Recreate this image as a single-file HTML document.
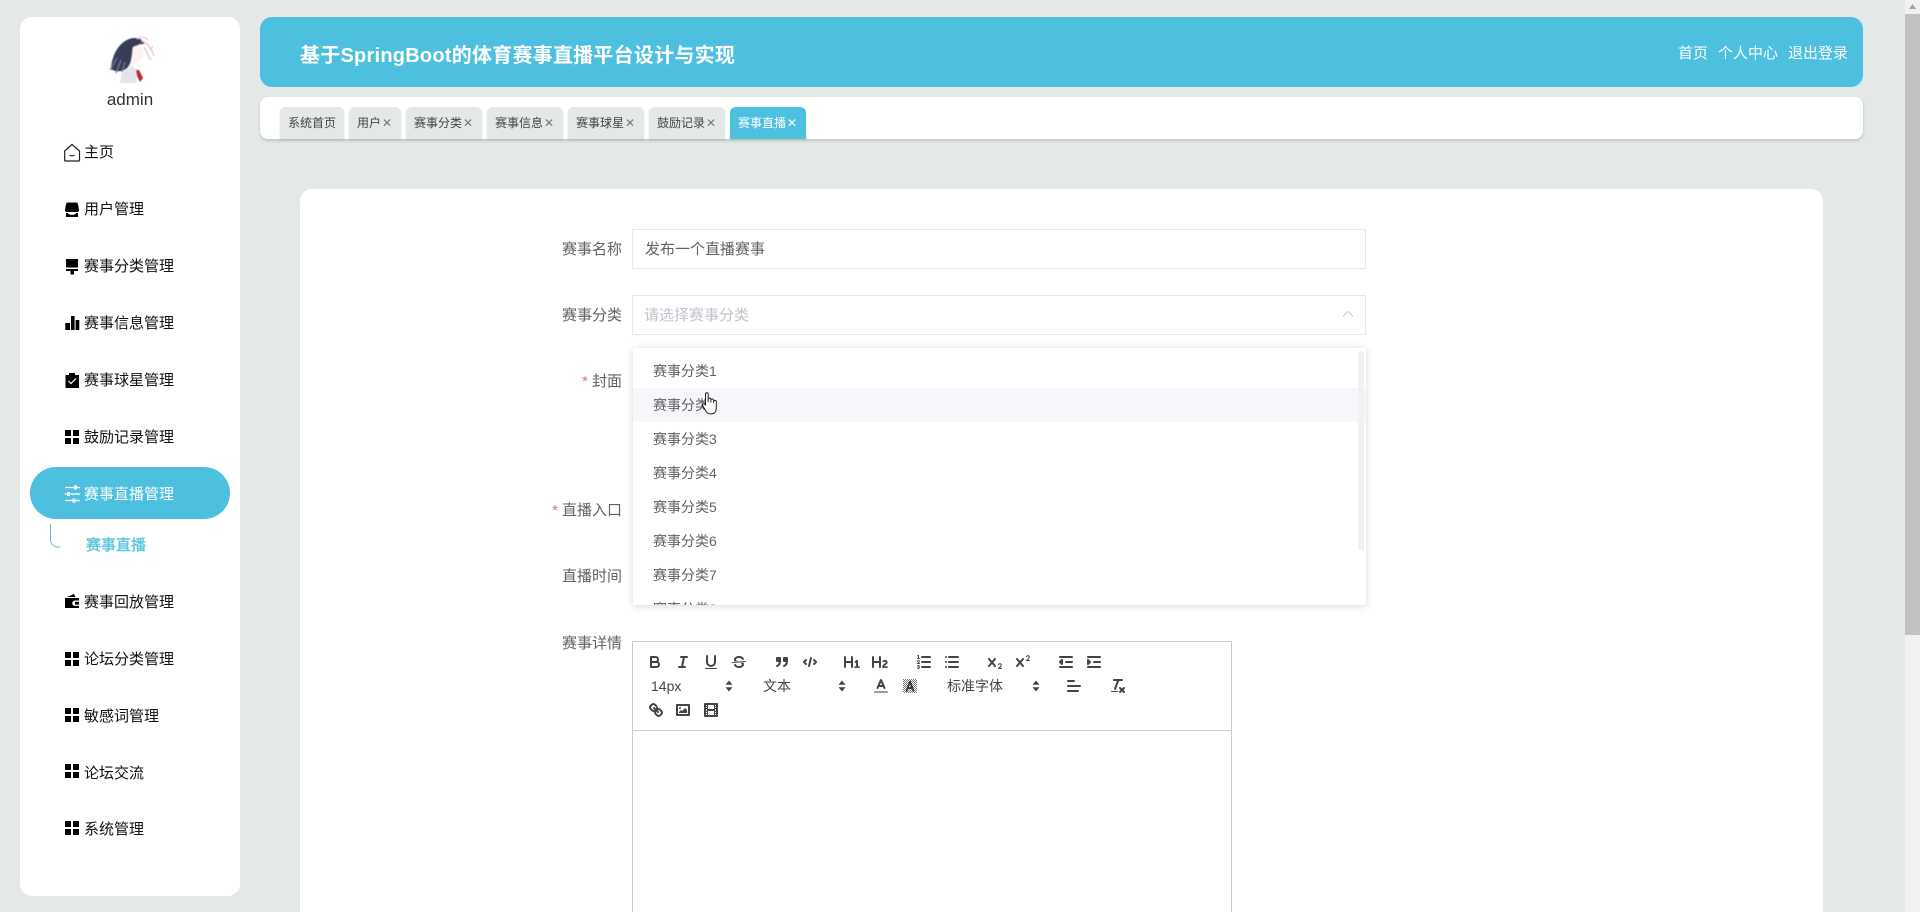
<!DOCTYPE html>
<html lang="zh-CN">
<head>
<meta charset="utf-8">
<title>赛事直播</title>
<style>
*{box-sizing:border-box;margin:0;padding:0}
html{width:1920px;height:912px;overflow:hidden;background:#e4e8e8}
body{position:relative;width:1920px;height:912px;overflow:hidden;background:#e4e8e8;font-family:"Liberation Sans","Noto Sans CJK SC",sans-serif}
.a{position:absolute}
#side{left:20px;top:17px;width:220px;height:879px;background:#fff;border-radius:12px}
.m{position:absolute;left:84px;font-size:15px;line-height:20px;margin-top:1px;color:#111;white-space:nowrap}
#pill{left:30px;top:467px;width:200px;height:52px;border-radius:26px;background:#4dbfdf}
#head{left:260px;top:17px;width:1603px;height:70px;border-radius:12px;background:#4dbfdf}
#title{left:300px;top:42px;font-size:20px;line-height:28px;font-weight:700;color:#fff;white-space:nowrap;letter-spacing:.24px}
.hl{position:absolute;top:44px;font-size:15px;line-height:20px;color:#fff;white-space:nowrap}
#tabs{left:260px;top:97px;width:1603px;height:42px;border-radius:8px;background:#fff;box-shadow:0 2px 3px rgba(0,0,0,.15)}
.t{position:absolute;top:107px;height:32px;border-radius:6px 6px 0 0;background:#e4e8e8;color:#444;font-size:12px;line-height:32px;padding-left:8px;white-space:nowrap;box-shadow:0 1px 2px rgba(0,0,0,.1)}
.t i{font-style:normal;color:#777;font-size:12px;margin-left:1px}
.t.on{background:#4dbfdf;color:#fff}.t.on i{color:#fff}
#card{left:300px;top:189px;width:1523px;height:723px;border-radius:12px 12px 0 0;background:#fff}
.lb{position:absolute;right:1298px;font-size:15px;line-height:20px;margin-top:1px;color:#606266;white-space:nowrap}
.lb b{font-weight:400;color:#f56c6c;margin-right:4px}
.inp{position:absolute;left:632px;width:734px;height:40px;border:1px solid #e6e8ea;background:#fff;font-size:15px;line-height:40px;padding-left:12px;color:#606266;overflow:hidden}
#dd{left:633px;top:348px;width:733px;height:257px;background:#fff;box-shadow:0 1px 8px rgba(0,0,0,.16);overflow:hidden;border-radius:2px}
.o{position:absolute;left:0;width:100%;height:34px;line-height:34px;padding-left:20px;font-size:14px;color:#606266;white-space:nowrap}
#ed{left:632px;top:641px;width:600px;height:271px;border:1px solid #ccc;border-bottom:0;background:#fff}
#edl{left:632px;top:730px;width:600px;height:1px;background:#ccc}
.q{position:absolute;width:18px;height:18px;overflow:visible}
.q *{stroke-linecap:round;stroke-linejoin:round}
.s{fill:none;stroke:#444;stroke-width:2}
.th{fill:none;stroke:#444;stroke-width:1}
.f{fill:#444}
.fs{fill:#444;stroke:#444;stroke-width:2}
.pk{position:absolute;font-size:14px;line-height:20px;color:#444;white-space:nowrap}
#sb{left:1905px;top:0;width:15px;height:912px;background:#f1f1f1}
#th{left:1905px;top:14px;width:15px;height:621px;background:#c1c1c1}
</style>
</head>
<body>
<div class="a" id="side"></div>

<svg class="a" style="left:100px;top:30px" width="60" height="60" viewBox="100 30 60 60">
<defs><filter id="bl" x="-10%" y="-10%" width="120%" height="120%"><feGaussianBlur stdDeviation=".5"/></filter></defs>
<g filter="url(#bl)">
<path d="M122 72L132 66L137 70L136 83L120 83Z" fill="#e4e4ea"/>
<path d="M111 69C112 53 121 39 134 38C141 38 144 41 144 44C138 44 134 47 133 53C132 60 130 66 126 69C121 72 115 72 111 69Z" fill="#363e58"/>
<path d="M117 58L110 70M121 60L116 73M125 62L122 72" stroke="#717a90" stroke-width="1.200" fill="none"/>
<path d="M133 47L141 44L144 55L142 60L138 62L134 66L129 67C132 60 132 53 133 47Z" fill="#fbf3f2"/>
<path d="M141 41C147 42 151 48 154 56M144 47C147 52 148 56 151 60M137 39C141 36 145 37 148 40M150 50L153 46" stroke="#e5bcc6" stroke-width="1.100" fill="none"/>
<path d="M136 70L139 70L143 78L140 82L137 76Z" fill="#b8262f"/>
</g>
</svg>
<div class="a" style="left:20px;width:220px;top:89px;text-align:center;font-size:17px;line-height:22px;color:#333">admin</div>

<div class="a" id="pill"></div>

<svg class="a" style="left:0;top:0" width="240" height="912" viewBox="0 0 240 912">
<!-- home -->
<path d="M72 144.500L64.700 151V160a1 1 0 0 0 1 1H78.500a1 1 0 0 0 1-1V151Z" fill="none" stroke="#222" stroke-width="1.200" stroke-linejoin="round"/>
<path d="M69.500 155c1.200 1.200 3.800 1.200 5 0" fill="none" stroke="#222" stroke-width="1.100"/>
<!-- shop -->
<path d="M68 202.500H76Q77.500 202.500 78 204L79 210Q79 212 77 212H67Q65 212 65 210L66 204Q66.500 202.500 68 202.500Z" fill="#000"/>
<path d="M66 213h2c0 2.500 8 2.500 8 0h2v4H66Z" fill="#000"/>
<!-- brush -->
<path d="M66 259H78V267.500H66ZM66 269H78V271H74V274.500H70.500V271H66Z" fill="#000"/>
<!-- data -->
<path d="M65.300 323H70V330H65.300ZM71 316H74.600V330H71ZM75.600 320H79.300V330H75.600Z" fill="#000"/>
<!-- claim -->
<path d="M65.500 375H69V373H75V375H79V388H65.500Z" fill="#000"/>
<path d="M68.500 381l2.500 2.500 5-5" fill="none" stroke="#fff" stroke-width="1.200"/>
<!-- menu 437 -->
<path d="M65 430h6v6H65ZM73 430h6v6H73ZM65 438h6v6H65ZM73 438h6v6H73Z" fill="#000"/>
<!-- sliders -->
<path d="M65 487.500H80M65 494H80M65 500.500H80" stroke="#fff" stroke-width="1.300"/>
<path d="M74 485.500h3v4h-3ZM67 492h3v4h-3ZM72.500 498.500h3v4h-3Z" fill="#fff"/>
<!-- wallet -->
<path d="M65 598H79V600.500H75a2.700 2.700 0 0 0 0 5.400H79V608H65ZM67 597l7-3 1.500 3Z" fill="#000"/>
<path d="M75 601.800h4v2.800h-4Z" fill="#000"/>
<!-- menus -->
<path d="M65 652h6v6H65ZM73 652h6v6H73ZM65 660h6v6H65ZM73 660h6v6H73Z" fill="#000"/>
<path d="M65 708h6v6H65ZM73 708h6v6H73ZM65 716h6v6H65ZM73 716h6v6H73Z" fill="#000"/>
<path d="M65 764h6v6H65ZM73 764h6v6H73ZM65 772h6v6H65ZM73 772h6v6H73Z" fill="#000"/>
<path d="M65 821h6v6H65ZM73 821h6v6H73ZM65 829h6v6H65ZM73 829h6v6H73Z" fill="#000"/>
<!-- sub line -->
<path d="M50.500 524v16a7 7 0 0 0 7 7h3" fill="none" stroke="#6fb6ca" stroke-width="1"/>
</svg>

<div class="m" style="top:142px">主页</div>
<div class="m" style="top:199px">用户管理</div>
<div class="m" style="top:256px">赛事分类管理</div>
<div class="m" style="top:313px">赛事信息管理</div>
<div class="m" style="top:370px">赛事球星管理</div>
<div class="m" style="top:427px">鼓励记录管理</div>
<div class="m" style="top:484px;color:#fff">赛事直播管理</div>
<div class="m" style="top:535px;left:86px;color:#5fc4de;-webkit-text-stroke:.4px #5fc4de">赛事直播</div>
<div class="m" style="top:592px">赛事回放管理</div>
<div class="m" style="top:649px">论坛分类管理</div>
<div class="m" style="top:706px">敏感词管理</div>
<div class="m" style="top:763px">论坛交流</div>
<div class="m" style="top:819px">系统管理</div>

<div class="a" id="head"></div>
<div class="a" id="title">基于SpringBoot的体育赛事直播平台设计与实现</div>
<div class="hl" style="left:1678px">首页</div>
<div class="hl" style="left:1718px">个人中心</div>
<div class="hl" style="left:1788px">退出登录</div>

<div class="a" id="tabs"></div>
<div class="t" style="left:280px;width:64px">系统首页</div>
<div class="t" style="left:349px;width:52px">用户<i>✕</i></div>
<div class="t" style="left:406px;width:76px">赛事分类<i>✕</i></div>
<div class="t" style="left:487px;width:76px">赛事信息<i>✕</i></div>
<div class="t" style="left:568px;width:76px">赛事球星<i>✕</i></div>
<div class="t" style="left:649px;width:76px">鼓励记录<i>✕</i></div>
<div class="t on" style="left:730px;width:76px">赛事直播<i>✕</i></div>

<div class="a" id="card"></div>

<div class="lb" style="top:239px">赛事名称</div>
<div class="inp" style="top:229px">发布一个直播赛事</div>
<div class="lb" style="top:305px">赛事分类</div>
<div class="inp" style="top:295px;color:#c0c4cc;padding-left:11px">请选择赛事分类</div>
<svg class="a" style="left:1342px;top:310px" width="12" height="8"><path d="M1 6.500L6 1.500l5 5" fill="none" stroke="#c8ccd2" stroke-width="1"/></svg>
<div class="lb" style="top:371px"><b>*</b>封面</div>
<div class="lb" style="top:500px"><b>*</b>直播入口</div>
<div class="lb" style="top:566px">直播时间</div>
<div class="lb" style="top:633px">赛事详情</div>

<div class="a" id="dd">
  <div class="o" style="top:6px">赛事分类1</div>
  <div class="o" style="top:40px;background:#f5f7fa">赛事分类2</div>
  <div class="o" style="top:74px">赛事分类3</div>
  <div class="o" style="top:108px">赛事分类4</div>
  <div class="o" style="top:142px">赛事分类5</div>
  <div class="o" style="top:176px">赛事分类6</div>
  <div class="o" style="top:210px">赛事分类7</div>
  <div class="o" style="top:244px">赛事分类8</div>
  <div class="a" style="left:725px;top:3px;width:6px;height:200px;background:#f0f1f3;border-radius:3px"></div>
</div>
<!-- hand cursor -->
<svg class="a" style="left:701px;top:391px" width="18" height="25" viewBox="0 0 20 26"><path d="M5 2.500a1.500 1.500 0 0 1 3 0V11V8.500a1.500 1.500 0 0 1 3 0V11.500V9.500a1.500 1.500 0 0 1 3 0V12V11a1.500 1.500 0 0 1 3 0v7c0 4-2 6.500-5.500 6.500H10c-3 0-4-2-5.500-4.500L2 15.500c-1-2 1-3 2.500-1.500L5 15z" fill="#fff" stroke="#222" stroke-width="1.100" stroke-linejoin="round"/></svg>

<div class="a" id="ed"></div>
<div class="a" id="edl"></div>

<!-- Row 1 -->
<svg class="q" style="left:646px;top:653px" viewBox="0 0 18 18"><path class="s" d="M5,4H9.500A2.500,2.500,0,0,1,12,6.500v0A2.500,2.500,0,0,1,9.500,9H5A0,0,0,0,1,5,9V4A0,0,0,0,1,5,4Z"/><path class="s" d="M5,9h5.500A2.500,2.500,0,0,1,13,11.500v0A2.500,2.500,0,0,1,10.500,14H5a0,0,0,0,1,0,0V9A0,0,0,0,1,5,9Z"/></svg>
<svg class="q" style="left:674px;top:653px" viewBox="0 0 18 18"><path class="s" d="M7 4H13M5 14H11M8 14L10 4"/></svg>
<svg class="q" style="left:702px;top:653px" viewBox="0 0 18 18"><path class="s" d="M5,3V9a4.012,4.012,0,0,0,4,4H9a4.012,4.012,0,0,0,4-4V3"/><rect class="f" height="1" rx=".5" ry=".5" width="12" x="3" y="15"/></svg>
<svg class="q" style="left:730px;top:653px" viewBox="0 0 18 18"><path class="th" d="M15.500 8.500L2.500 9.500"/><path class="f" d="M9.007,8C6.542,7.791,6,7.519,6,6.500,6,5.792,7.283,5,9,5c1.571,0,2.765.679,2.969,1.309a1,1,0,0,0,1.900-.617C13.356,4.106,11.354,3,9,3,6.200,3,4,4.538,4,6.500a3.200,3.200,0,0,0,.5,1.843Z"/><path class="f" d="M8.984,10C11.457,10.208,12,10.479,12,11.500c0,.708-1.283,1.500-3,1.500-1.571,0-2.765-.679-2.969-1.309a1,1,0,1,0-1.900.617C4.644,13.894,6.646,15,9,15c2.800,0,5-1.538,5-3.500a3.200,3.200,0,0,0-.5-1.843Z"/></svg>
<svg class="q" style="left:773px;top:653px" viewBox="0 0 18 18"><rect class="fs" height="3" width="3" x="4" y="5"/><rect class="fs" height="3" width="3" x="11" y="5"/><path class="s" d="M7,8c0,4.031-3,5-3,5"/><path class="s" d="M14,8c0,4.031-3,5-3,5"/></svg>
<svg class="q" style="left:801px;top:653px" viewBox="0 0 18 18"><path class="s" d="M5 7L3 9L5 11M13 7L15 9L13 11M10 5L8 13"/></svg>
<svg class="q" style="left:843px;top:653px" viewBox="0 0 18 18"><path class="f" d="M10,4V14a1,1,0,0,1-2,0V10H3v4a1,1,0,0,1-2,0V4A1,1,0,0,1,3,4V8H8V4a1,1,0,0,1,2,0Zm6.068,9.209H14.990V7.599a.541.541,0,0,0-.605-.605h-.627a1.011,1.011,0,0,0-.748.297L11.645,8.566a.544.544,0,0,0-.022.858l.286.308a.539.539,0,0,0,.847.033l.099-.088a1.214,1.214,0,0,0,.242-.353h.022s-.011.309-.011.605V13.209H12.041a.541.541,0,0,0-.605.605v.440a.541.541,0,0,0,.605.605h4.027a.541.541,0,0,0,.605-.605v-.440A.541.541,0,0,0,16.068,13.209Z"/></svg>
<svg class="q" style="left:871px;top:653px" viewBox="0 0 18 18"><path class="f" d="M16.740,13.814v.440a.541.541,0,0,1-.605.605H11.855a.584.584,0,0,1-.649-.605V14.013c0-2.905,3.399-3.422,3.399-4.555a.777.777,0,0,0-.847-.781,1.177,1.177,0,0,0-.836.385c-.275.264-.561.374-.858.132l-.429-.341c-.308-.242-.385-.518-.154-.814a2.972,2.972,0,0,1,2.454-1.177,2.454,2.454,0,0,1,2.684,2.409c0,2.453-3.179,2.927-3.278,3.938h2.794A.541.541,0,0,1,16.740,13.814ZM9,3A1,1,0,0,0,8,4V8H3V4A1,1,0,0,0,1,4V14a1,1,0,0,0,2,0V10H8v4a1,1,0,0,0,2,0V4A1,1,0,0,0,9,3Z"/></svg>
<svg class="q" style="left:915px;top:653px" viewBox="0 0 18 18"><path class="s" d="M7 4H15M7 9H15M7 14H15"/><path class="th" d="M2.500 5.500H4.500"/><path class="f" d="M3.500,6A0.500,0.500,0,0,1,3,5.500V3.085l-0.276.138A0.500,0.500,0,0,1,2.053,3c-0.124-.247-0.023-0.324.224-0.447l1-.5A0.500,0.500,0,0,1,4,2.500v3A0.500,0.500,0,0,1,3.500,6Z"/><path class="th" d="M4.500,10.500h-2c0-.234,1.850-1.076,1.850-2.234A0.959,0.959,0,0,0,2.500,8.156"/><path class="th" d="M2.500,14.846a0.959,0.959,0,0,0,1.850-.109A0.700,0.700,0,0,0,3.750,14a0.688,0.688,0,0,0,.6-0.736,0.959,0.959,0,0,0-1.850-.109"/></svg>
<svg class="q" style="left:943px;top:653px" viewBox="0 0 18 18"><path class="s" d="M6 4H15M6 9H15M6 14H15M3 4H3M3 9H3M3 14H3"/></svg>
<svg class="q" style="left:986px;top:653px" viewBox="0 0 18 18"><path class="f" d="M15.500,15H13.861a3.858,3.858,0,0,0,1.914-2.975,1.800,1.800,0,0,0-1.600-1.751A1.921,1.921,0,0,0,12.021,11.700a0.500,0.500,0,1,0,.957.291h0a0.914,0.914,0,0,1,1.053-.725,0.810,0.810,0,0,1,.744.762c0,1.076-1.170,1.870-1.940,2.431A1.456,1.456,0,0,0,12,15.500a0.500,0.500,0,0,0,.5.5h3A0.500,0.500,0,0,0,15.500,15Z"/><path class="f" d="M9.650,5.241a1,1,0,0,0-1.409.108L6,7.964,3.759,5.349A1,1,0,0,0,2.192,6.592Q2.215,6.621,2.241,6.649L4.684,9.500,2.241,12.350A1,1,0,0,0,3.710,13.707q0.026-.028.049-.057L6,11.036,8.241,13.650a1,1,0,1,0,1.567-1.243Q9.785,12.378,9.759,12.350L7.316,9.500,9.759,6.651A1,1,0,0,0,9.650,5.241Z"/></svg>
<svg class="q" style="left:1014px;top:653px" viewBox="0 0 18 18"><path class="f" d="M15.500,7H13.861a4.015,4.015,0,0,0,1.914-2.975,1.800,1.800,0,0,0-1.600-1.751A1.922,1.922,0,0,0,12.021,3.700a0.500,0.500,0,1,0,.957.291,0.917,0.917,0,0,1,1.053-.725,0.810,0.810,0,0,1,.744.762c0,1.077-1.164,1.925-1.934,2.486A1.423,1.423,0,0,0,12,7.500a0.500,0.500,0,0,0,.5.5h3A0.500,0.500,0,0,0,15.500,7Z"/><path class="f" d="M9.651,5.241a1,1,0,0,0-1.410.108L6,7.964,3.759,5.349a1,1,0,1,0-1.519,1.300L4.683,9.500,2.241,12.350a1,1,0,1,0,1.519,1.300L6,11.036,8.241,13.650a1,1,0,0,0,1.519-1.300L7.317,9.500,9.759,6.651A1,1,0,0,0,9.651,5.241Z"/></svg>
<svg class="q" style="left:1057px;top:653px" viewBox="0 0 18 18"><path class="s" d="M3 14H15M3 4H15M9 9H15"/><path class="fs" d="M5 7L5 11L3 9Z"/></svg>
<svg class="q" style="left:1085px;top:653px" viewBox="0 0 18 18"><path class="s" d="M3 14H15M3 4H15M9 9H15"/><path class="fs" d="M3 7L3 11L5 9Z"/></svg>

<!-- Row 2 -->
<div class="pk" style="left:651px;top:676px">14px</div>
<svg class="q" style="left:720px;top:677px" viewBox="0 0 18 18"><path class="f" d="M5.500 7.700L9 3.500L12.500 7.700ZM5.500 10.300L9 14.500L12.500 10.300Z"/></svg>
<div class="pk" style="left:763px;top:676px">文本</div>
<svg class="q" style="left:833px;top:677px" viewBox="0 0 18 18"><path class="f" d="M5.500 7.700L9 3.500L12.500 7.700ZM5.500 10.300L9 14.500L12.500 10.300Z"/></svg>
<svg class="q" style="left:872px;top:677px" viewBox="0 0 18 18"><path d="M3 15H15" stroke="#444" stroke-width="2" opacity=".55" fill="none"/><path class="s" d="M5.500 11L9 3L12.500 11M11.630 9H6.380"/></svg>
<svg class="q" style="left:901px;top:677px" viewBox="0 0 18 18"><defs><pattern id="chk" width="2" height="2" patternUnits="userSpaceOnUse"><rect width="1" height="1" fill="#777"/><rect x="1" y="1" width="1" height="1" fill="#777"/></pattern></defs><rect x="2" y="2" width="14" height="14" fill="url(#chk)"/><path d="M5.500 14L9 4.500L12.500 14M11.400 11H6.600" fill="none" stroke="#333" stroke-width="1.700"/></svg>
<div class="pk" style="left:947px;top:676px">标准字体</div>
<svg class="q" style="left:1027px;top:677px" viewBox="0 0 18 18"><path class="f" d="M5.500 7.700L9 3.500L12.500 7.700ZM5.500 10.300L9 14.500L12.500 10.300Z"/></svg>
<svg class="q" style="left:1065px;top:677px" viewBox="0 0 18 18"><path class="s" d="M3 9H15M3 14H13M3 4H9"/></svg>
<svg class="q" style="left:1109px;top:677px" viewBox="0 0 18 18"><path class="s" d="M5 3H13M6 12L9.350 3M11 11L15 15M15 11L11 15"/><rect class="f" height="1" rx=".5" ry=".5" width="7" x="2" y="14"/></svg>

<!-- Row 3 -->
<svg class="q" style="left:647px;top:701px" viewBox="0 0 18 18"><path class="s" d="M7 7L11 11"/><path class="s" d="M8.900,4.577a3.476,3.476,0,0,1,.36,4.679A3.476,3.476,0,0,1,4.577,8.900C3.185,7.500,2.035,6.400,4.217,4.217S7.500,3.185,8.900,4.577Z"/><path class="s" d="M13.423,9.100a3.476,3.476,0,0,0-4.679-.36,3.476,3.476,0,0,0,.36,4.679c1.392,1.392,2.500,2.542,4.679.36S14.815,10.500,13.423,9.100Z"/></svg>
<svg class="q" style="left:674px;top:701px" viewBox="0 0 18 18"><rect class="s" height="10" width="12" x="3" y="4"/><circle class="f" cx="6" cy="7" r="1"/><path class="f" d="M5 12V11L7 9L8 10L11 7L13 9V12Z"/></svg>
<svg class="q" style="left:702px;top:701px" viewBox="0 0 18 18"><rect class="s" height="12" width="12" x="3" y="3"/><path class="f" d="M5 3h1v12H5zM12 3h1v12h-1zM5 8h8v2H5zM3 5h3v1H3zM3 7h3v1H3zM3 10h3v1H3zM3 12h3v1H3zM12 5h3v1h-3zM12 7h3v1h-3zM12 10h3v1h-3zM12 12h3v1h-3z"/></svg>

<div class="a" id="sb"></div>
<div class="a" id="th"></div>
<svg class="a" style="left:1905px;top:0" width="15" height="14"><path d="M7.500 4L11 9H4z" fill="#a3a3a3"/></svg>
</body>
</html>
